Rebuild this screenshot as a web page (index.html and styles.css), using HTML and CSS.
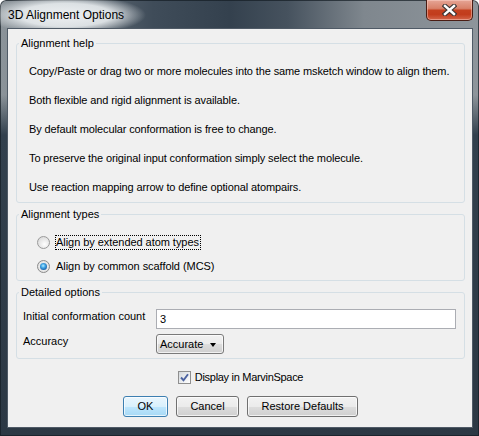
FILE: index.html
```html
<!DOCTYPE html>
<html lang="en">
<head>
<meta charset="utf-8">
<title>3D Alignment Options</title>
<link rel="stylesheet" href="styles.css">
</head>
<body>
<div class="window">
  <div class="titlebar">
    <span class="title">3D Alignment Options</span>
    <button class="close" aria-label="Close">
      <svg width="15" height="12" viewBox="0 0 15 12">
        <path d="M3 2 L12 10 M12 2 L3 10" stroke="#3b3433" stroke-width="4.6" stroke-linecap="square"/>
        <path d="M3 2 L12 10 M12 2 L3 10" stroke="#ffffff" stroke-width="2.4" stroke-linecap="square"/>
      </svg>
    </button>
  </div>
  <div class="client">
    <fieldset class="group help">
      <legend>Alignment help</legend>
      <div class="help-body">
        <p>Copy/Paste or drag two or more molecules into the same msketch window to align them.</p>
        <p>Both flexible and rigid alignment is available.</p>
        <p>By default molecular conformation is free to change.</p>
        <p>To preserve the original input conformation simply select the molecule.</p>
        <p>Use reaction mapping arrow to define optional atompairs.</p>
      </div>
    </fieldset>
    <fieldset class="group types">
      <legend>Alignment types</legend>
      <div class="types-body">
        <label class="radio-row"><span class="radio"></span><span class="radio-text focused">Align by extended atom types</span></label>
        <label class="radio-row"><span class="radio checked"><span class="dot"></span></span><span class="radio-text">Align by common scaffold (MCS)</span></label>
      </div>
    </fieldset>
    <fieldset class="group options">
      <legend>Detailed options</legend>
      <div class="options-body">
        <span class="field-label">Initial conformation count</span>
        <div class="textfield">3</div>
        <span class="field-label">Accuracy</span>
        <div class="combo"><span>Accurate</span><span class="arrow"></span></div>
      </div>
    </fieldset>
    <div class="check-row">
      <span class="checkbox">
        <svg width="11" height="11" viewBox="0 0 11 11"><path d="M2 5.5 L4.5 8.2 L9 2.2" fill="none" stroke="#4b62a0" stroke-width="1.9"/></svg>
      </span>
      <span class="check-text">Display in MarvinSpace</span>
    </div>
    <div class="buttons">
      <button class="btn default ok">OK</button>
      <button class="btn cancel">Cancel</button>
      <button class="btn restore">Restore Defaults</button>
    </div>
  </div>
</div>
</body>
</html>
```

FILE: styles.css
```css
html, body {
  margin: 0;
  padding: 0;
  background: #ffffff;
}

body {
  font: 11px "Liberation Sans", Arial, sans-serif;
  color: #000;
}

.window {
  width: 479px;
  height: 436px;
  box-sizing: border-box;
  display: flex;
  flex-direction: column;
  border-radius: 6px 6px 0 0;
  background:
    linear-gradient(180deg, rgba(49, 61, 74, 0) 0px, rgba(49, 61, 74, 0) 95px, #32404d 135px, #2c3844 100%),
    linear-gradient(90deg, #8c949a 0%, #6e7881 12%, #3f4c59 32%, #34414e 48%, #46525e 60%, #7f878e 76%, #8e959b 100%);
  box-shadow: inset 0 0 0 1px rgba(20, 28, 36, 0.7);
}

.titlebar {
  height: 28px;
  flex: none;
  display: flex;
  justify-content: space-between;
  align-items: flex-start;
  background: radial-gradient(80px 20px at 66px 15px, rgba(242, 244, 246, 0.97) 0%, rgba(236, 240, 242, 0.88) 58%, rgba(220, 226, 230, 0) 100%);
  border-radius: 6px 6px 0 0;
}

.title {
  margin: 8px 0 0 8px;
  font-size: 12px;
  line-height: 14px;
  color: #000;
}

.close {
  width: 47px;
  height: 21px;
  margin: 0 6px 0 0;
  padding: 0;
  box-sizing: border-box;
  border: 1px solid #4a1d14;
  border-top: none;
  border-radius: 0 0 5px 5px;
  background: linear-gradient(180deg, #e6a596 0%, #d88169 42%, #c4401f 52%, #c23c1c 72%, #d4654a 100%);
  box-shadow: inset 0 0 0 1px rgba(255, 220, 210, 0.45);
  display: flex;
  align-items: center;
  justify-content: center;
}

.close svg {
  display: block;
}

.client {
  flex: 1;
  margin: 0 6px 8px 7px;
  border: 1px solid #4f5a66;
  background: #f0f0f0;
  padding: 0 7px 0 8px;
  display: flex;
  flex-direction: column;
}

.group {
  margin: 0;
  padding: 0;
  border: 1px solid #d5dfe5;
  border-radius: 3px;
  min-width: 0;
}

.group legend {
  padding: 0 2px;
  margin-left: 2px;
  line-height: 14px;
  color: #000;
}

.help {
  margin-top: 7px;
}

.help-body {
  padding: 7px 0 0 12px;
}

.help-body p {
  margin: 0;
  line-height: 29px;
  white-space: nowrap;
  letter-spacing: -0.12px;
}

.types {
  margin-top: 4px;
}

.types-body {
  padding: 9px 0 2px 20px;
}

.radio-row {
  height: 24px;
  display: flex;
  align-items: center;
}

.radio {
  width: 13px;
  height: 13px;
  box-sizing: border-box;
  border-radius: 50%;
  border: 1px solid #9a9a9a;
  background: radial-gradient(circle at 60% 65%, #ffffff 0%, #eeeeee 35%, #d3d3d3 100%);
  margin-right: 5px;
  display: flex;
  align-items: center;
  justify-content: center;
  flex: none;
}

.radio.checked {
  border-color: #8a8a8a;
  background: radial-gradient(circle at 50% 50%, #f6f6f6 0%, #dcdcdc 100%);
}

.radio .dot {
  width: 7px;
  height: 7px;
  border-radius: 50%;
  background: radial-gradient(circle at 45% 40%, #b6ecff 0%, #42a7e6 35%, #1a5fa8 75%, #173f70 100%);
}

.radio-text {
  border: 1px solid transparent;
  padding: 0 1px 0 0;
  line-height: 13px;
  letter-spacing: -0.05px;
}

.radio-text.focused {
  border: 1px dotted #000;
}

.options {
  margin-top: 4px;
}

.options-body {
  display: grid;
  grid-template-columns: 133px 300px;
  row-gap: 5px;
  padding: 10px 0 4px 6px;
}

.field-label {
  line-height: 14px;
  align-self: start;
}

.textfield {
  height: 20px;
  box-sizing: border-box;
  border: 1px solid #abadb3;
  background: #fff;
  padding: 0 3px;
  line-height: 19px;
}

.combo {
  width: 68px;
  height: 20px;
  box-sizing: border-box;
  border: 1px solid #7a7a7a;
  border-radius: 3px;
  background: linear-gradient(180deg, #f2f2f2 0%, #ebebeb 50%, #dddddd 51%, #cfcfcf 100%);
  box-shadow: inset 0 0 0 1px rgba(255, 255, 255, 0.7);
  display: flex;
  align-items: center;
  padding-left: 3px;
}

.combo .arrow {
  margin-left: auto;
  margin-right: 7px;
  width: 0;
  height: 0;
  border-left: 3.5px solid transparent;
  border-right: 3.5px solid transparent;
  border-top: 4px solid #000;
  margin-top: 2px;
}

.check-row {
  margin-top: 10px;
  height: 16px;
  display: flex;
  justify-content: center;
  align-items: center;
  gap: 4px;
}

.check-text {
  letter-spacing: -0.3px;
}

.checkbox {
  width: 13px;
  height: 13px;
  box-sizing: border-box;
  border: 1px solid #8f8f8f;
  background: linear-gradient(135deg, #d4d8dc 0%, #eef0f2 60%, #ffffff 100%);
  display: flex;
  align-items: center;
  justify-content: center;
}

.checkbox svg {
  display: block;
}

.buttons {
  margin-top: 11px;
  display: flex;
  justify-content: center;
  gap: 8px;
}

.btn {
  height: 21px;
  box-sizing: border-box;
  padding: 0 0 1px;
  font: 11px "Liberation Sans", Arial, sans-serif;
  color: #000;
  border: 1px solid #707070;
  border-radius: 3px;
  background: linear-gradient(180deg, #f2f2f2 0%, #ebebeb 50%, #dddddd 51%, #cfcfcf 100%);
  box-shadow: inset 0 0 0 1px rgba(255, 255, 255, 0.7);
}

.btn.default {
  border-color: #3c7fb1;
  background: linear-gradient(180deg, #eaf6fd 0%, #d9f0fc 50%, #bee6fd 51%, #a7d9f5 100%);
}

.ok { width: 45px; }
.cancel { width: 63px; }
.restore { width: 111px; }
```
